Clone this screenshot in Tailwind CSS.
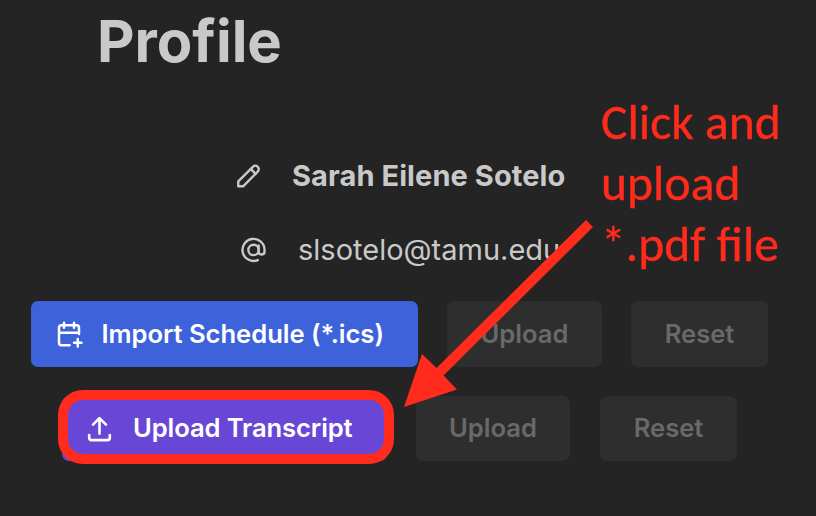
<!DOCTYPE html>
<html lang="en"><head><meta charset="utf-8"><title>Profile</title>
<script src="https://cdn.jsdelivr.net/npm/@tailwindcss/browser@4"></script></head>
<body class="bg-[#242424]">
<main class="relative w-[816px] h-[516px] overflow-hidden bg-[#242424] font-['Inter',sans-serif] text-[#c9c9c9] flex flex-col">
  <h1 class="h-[84px] pl-[97px] text-[58px] leading-[82px] font-bold whitespace-nowrap">Profile</h1>
  <div class="mt-[62px] h-[60px] pl-[235px] flex items-center">
    <svg class="w-[26px] h-[26px] shrink-0" viewBox="0 0 24 24" fill="none" stroke="currentColor" stroke-width="2.2" stroke-linecap="round" stroke-linejoin="round"><path d="M3 21.500v-4.500L16.500 3.500a2.800 2.800 0 0 1 4.500 4.500L7.500 21.500H3"/><path d="M14.500 5.500l4.500 4.500"/></svg>
    <span class="ml-[31px] text-[29px] tracking-[0.08px] font-bold whitespace-nowrap">Sarah Eilene Sotelo</span>
  </div>
  <div class="mt-[14px] h-[60px] pl-[240px] flex items-center">
    <svg class="w-[27px] h-[27px] shrink-0" viewBox="0 0 24 24" fill="none" stroke="currentColor" stroke-width="2.1" stroke-linecap="round" stroke-linejoin="round"><circle cx="12" cy="11.500" r="4.600"/><path d="M16.600 7.500v5.500a2.600 2.600 0 0 0 5.200 0V11.500a9.800 9.800 0 1 0-6 9"/></svg>
    <span class="ml-[31px] text-[29px] whitespace-nowrap">slsotelo@tamu.edu</span>
  </div>
  <div class="mt-[21px] h-[66px] pl-[31px] flex gap-[29px] text-[25.6px] font-semibold">
    <button class="w-[387px] rounded-[7px] bg-[#3d62d9] text-white flex items-center pl-[23px]">
      <svg class="w-[30px] h-[30px] shrink-0" viewBox="0 0 24 24" fill="none" stroke="currentColor" stroke-width="2" stroke-linecap="round" stroke-linejoin="round"><path d="M12.500 21H6a2 2 0 0 1-2-2V7a2 2 0 0 1 2-2h12a2 2 0 0 1 2 2v5M16 3v4M8 3v4M4 11h16M16 19h6M19 16v6"/></svg>
      <span class="ml-[17.500px] pt-px tracking-[-0.04px] whitespace-nowrap">Import Schedule (*.ics)</span>
    </button>
    <button class="w-[155px] rounded-[7px] bg-[#2e2e2e] text-[#696969] pt-px">Upload</button>
    <button class="w-[137px] rounded-[7px] bg-[#2e2e2e] text-[#696969] pt-px">Reset</button>
  </div>
  <div class="mt-[29px] h-[65px] pl-[62px] flex text-[25.6px] font-semibold">
    <button class="w-[325px] rounded-[7px] bg-[#6947d6] text-white flex items-center pl-[22px]">
      <svg class="w-[31px] h-[31px] shrink-0" viewBox="0 0 24 24" fill="none" stroke="currentColor" stroke-width="2" stroke-linecap="round" stroke-linejoin="round"><path d="M4 17v2a2 2 0 0 0 2 2h12a2 2 0 0 0 2-2v-2M7 9l5-5 5 5M12 4v12"/></svg>
      <span class="ml-[18px] pb-px tracking-[-0.1px] whitespace-nowrap">Upload Transcript</span>
    </button>
    <button class="ml-[29px] w-[154px] rounded-[7px] bg-[#2e2e2e] text-[#696969] pb-px">Upload</button>
    <button class="ml-[30px] w-[137px] rounded-[7px] bg-[#2e2e2e] text-[#696969] pb-px">Reset</button>
  </div>
  <div class="absolute left-[58px] top-[390px] w-[336px] h-[74px] rounded-[25px] border-[10px] border-[#ff2b1c]"></div>
  <svg class="absolute inset-0 w-[816px] h-[516px]" viewBox="0 0 816 516" fill="#ff2b1c"><path d="M586 220l7 7L443.500 375.500 457 389.500 404 407 422 354 436.500 368z"/></svg>
  <div class="absolute left-[601px] top-[92px] font-['Carlito','Noto_Sans',sans-serif] text-[49.600px] leading-[61px] text-[#ff2b1c] [-webkit-text-stroke:0.4px_#ff2b1c] whitespace-nowrap">
    <div>Click and</div>
    <div>upload</div>
    <div>*.pdf file</div>
  </div>
</main>
</body></html>
